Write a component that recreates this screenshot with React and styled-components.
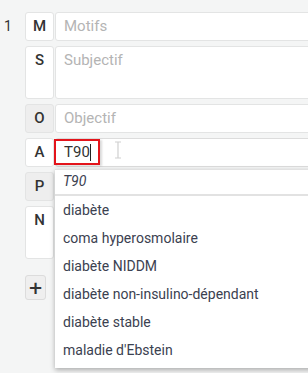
import React from 'react'
import styled, { createGlobalStyle } from 'styled-components'

const Global = createGlobalStyle`
  html, body {
    margin: 0;
    height: 100%;
    background: #f4f5f5;
    overflow: hidden;
    font-family: Roboto, 'Liberation Sans', sans-serif;
  }
`

const Page = styled.div`
  display: flex;
  padding-top: 12px;
`

const Number = styled.div`
  flex-shrink: 0;
  width: 21px;
  padding-left: 4px;
  font-size: 14px;
  line-height: 29px;
  color: #333;
`

const Rows = styled.div`
  flex-shrink: 0;
  display: flex;
  flex-direction: column;
  gap: 5px;
  width: 420px;
`

const Row = styled.div`
  display: flex;
  gap: 1px;
  height: ${(p) => (p.tall ? 53 : 29)}px;
  position: relative;
`

const Label = styled.div`
  box-sizing: border-box;
  width: 29px;
  border: 1px solid #e3e4e4;
  border-radius: 3px;
  background: ${(p) => (p.shaded ? '#eeeeee' : '#ffffff')};
  text-align: center;
  font-size: 15px;
  font-weight: 500;
  line-height: 27px;
  color: #333;
`

const Field = styled.div`
  box-sizing: border-box;
  flex: 1;
  display: flex;
  align-items: flex-start;
  border: 1px solid #e3e4e4;
  border-radius: 3px;
  background: #fff;
  padding: 0 8px;
  font-size: 15px;
  line-height: 27px;
  color: #b4b4b4;
  position: relative;
`

const ActiveField = styled(Field)`
  padding: 0;
  border-color: #dcdcdc;
`

const Entry = styled.div`
  box-sizing: border-box;
  margin-left: -2px;
  width: 46px;
  height: 26px;
  border: 2px solid #e3141b;
  box-shadow: 2px 1px 2px rgba(0, 0, 0, 0.15);
  padding-left: 8px;
  display: flex;
  align-items: center;
  font-size: 15px;
  color: #333;
`

const Caret = styled.span`
  display: inline-block;
  width: 1px;
  height: 17px;
  background: #222;
`

const Beam = styled.svg`
  position: absolute;
  left: 58px;
  top: 2px;
`

const Menu = styled.div`
  position: absolute;
  top: calc(100% + 2px);
  left: 30px;
  right: -100px;
  background: #fff;
  box-shadow: 0 2px 5px rgba(0, 0, 0, 0.3);
  padding-bottom: 4px;
  z-index: 2;
`

const Query = styled.div`
  height: 24px;
  border-top: 1px solid #e2e2e2;
  border-bottom: 2px solid #e2e2e2;
  padding-left: 8px;
  font-size: 14px;
  font-style: italic;
  line-height: 22px;
  color: #3b4150;
`

const Item = styled.div`
  height: 28px;
  padding-left: 8px;
  font-size: 14px;
  line-height: 28px;
  color: #3b4150;
  white-space: nowrap;
`

const Add = styled.button`
  box-sizing: border-box;
  margin-top: 11px;
  width: 21px;
  height: 25px;
  padding: 0;
  border: 1px solid #dcdcdc;
  border-radius: 3px;
  background: #efefef;
  font-family: 'DejaVu Sans', sans-serif;
  font-size: 18px;
  font-weight: bold;
  line-height: 22px;
  color: #333;
`

const suggestions = [
  'diabète',
  'coma hyperosmolaire',
  'diabète NIDDM',
  'diabète non-insulino-dépendant',
  'diabète stable',
  "maladie d'Ebstein",
]

export default function App() {
  return (
    <>
      <Global />
      <Page>
        <Number>1</Number>
        <Rows>
          <Row>
            <Label>M</Label>
            <Field>Motifs</Field>
          </Row>
          <Row tall>
            <Label>S</Label>
            <Field>Subjectif</Field>
          </Row>
          <Row>
            <Label shaded>O</Label>
            <Field>Objectif</Field>
          </Row>
          <Row>
            <Label>A</Label>
            <ActiveField>
              <Entry>
                T90
                <Caret />
              </Entry>
              <Beam width="8" height="18" viewBox="0 0 8 18">
                <path d="M1 1h6M4 1v16M1 17h6" stroke="#d0d0d0" strokeWidth="1.2" fill="none" />
              </Beam>
            </ActiveField>
            <Menu>
              <Query>T90</Query>
              {suggestions.map((s) => (
                <Item key={s}>{s}</Item>
              ))}
            </Menu>
          </Row>
          <Row>
            <Label shaded>P</Label>
            <Field />
          </Row>
          <Row tall>
            <Label>N</Label>
            <Field />
          </Row>
          <div>
            <Add>+</Add>
          </div>
        </Rows>
      </Page>
    </>
  )
}
